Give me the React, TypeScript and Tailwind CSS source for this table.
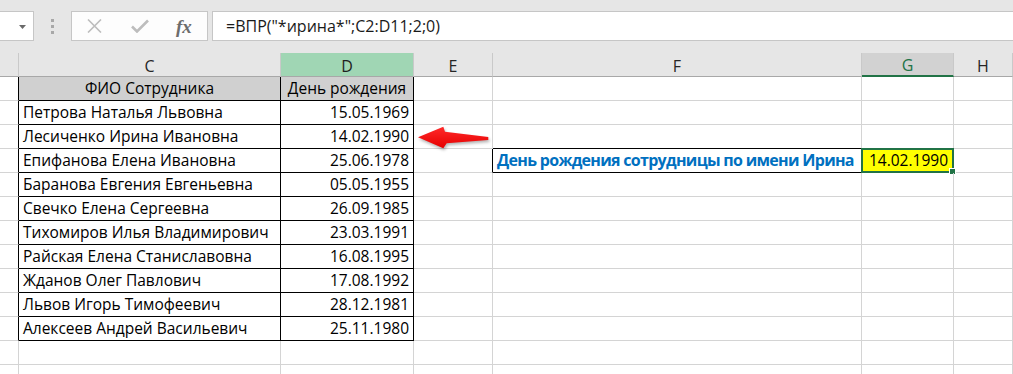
import React from "react";

const FONT = { fontFamily: '"Open Sans", "Noto Sans", sans-serif' };

const people: [string, string][] = [
  ["Петрова Наталья Львовна", "15.05.1969"],
  ["Лесиченко Ирина Ивановна", "14.02.1990"],
  ["Епифанова Елена Ивановна", "25.06.1978"],
  ["Баранова Евгения Евгеньевна", "05.05.1955"],
  ["Свечко Елена Сергеевна", "26.09.1985"],
  ["Тихомиров Илья Владимирович", "23.03.1991"],
  ["Райская Елена Станиславовна", "16.08.1995"],
  ["Жданов Олег Павлович", "17.08.1992"],
  ["Львов Игорь Тимофеевич", "28.12.1981"],
  ["Алексеев Андрей Васильевич", "25.11.1980"],
];

function FormulaBar() {
  return (
    <div className="h-[53px] bg-[#e6e6e6] pt-[11px]">
      <div className="flex h-[30px] items-stretch">
        {/* name box */}
        <div className="relative w-[34px] shrink-0 border-y border-r border-[#c6c6c6] bg-white">
          <svg className="absolute left-[19px] top-[13px]" width="7" height="4" viewBox="0 0 7 4">
            <path d="M0 0 L7 0 L3.5 4 Z" fill="#6a6a6a" />
          </svg>
        </div>
        {/* grip */}
        <div className="flex w-[37px] shrink-0 flex-col items-center justify-center gap-[3px]">
          <span className="h-[3px] w-[3px] bg-[#a8a8a8]" />
          <span className="h-[3px] w-[3px] bg-[#a8a8a8]" />
          <span className="h-[3px] w-[3px] bg-[#a8a8a8]" />
        </div>
        {/* cancel / enter / function */}
        <div className="flex w-[137px] shrink-0 items-center border border-[#c6c6c6] bg-[#fdfdfd]">
          <svg className="ml-[15px]" width="15" height="14" viewBox="0 0 15 14">
            <path d="M1 0.5 L14 13.5 M14 0.5 L1 13.5" stroke="#bdbdbd" strokeWidth="1.6" fill="none" />
          </svg>
          <svg className="ml-[29px]" width="18" height="14" viewBox="0 0 18 14">
            <path d="M1 7.5 L6 12.5 L17 1.5" stroke="#bdbdbd" strokeWidth="2.6" fill="none" />
          </svg>
          <span
            className="ml-[27px] text-[19px] font-bold italic leading-none text-[#6d6d6d]"
            style={{ fontFamily: '"Liberation Serif", "DejaVu Serif", serif' }}
          >
            fx
          </span>
        </div>
        {/* formula input */}
        <div className="ml-[4px] flex-1 border-y border-l border-[#c6c6c6] bg-white pl-[13px]">
          <span className="text-[16px] leading-[28px] text-[#1a1a1a]" style={FONT}>
            =ВПР("*ирина*";C2:D11;2;0)
          </span>
        </div>
      </div>
    </div>
  );
}

function ColumnHeaders() {
  const base =
    "h-[24px] shrink-0 border-r border-b border-r-[#c9c9c9] border-b-[#a8a8a8] pt-[2px] text-center text-[16px] leading-[22px]";
  return (
    <div className="flex bg-[#e6e6e6] text-[#262626]" style={FONT}>
      <div className={`${base} w-[19px]`} />
      <div className={`${base} w-[262px]`}>C</div>
      <div className={`${base} w-[133px] bg-[#a0d6b4] text-[#1e1e1e]`}>D</div>
      <div className={`${base} w-[79px]`}>E</div>
      <div className={`${base} w-[369px]`}>F</div>
      <div className="h-[24px] w-[92px] shrink-0 border-r border-b-2 border-r-[#c9c9c9] border-b-[#217346] bg-[#d2d2d2] pt-[2px] text-center text-[16px] leading-[21px] text-[#217346]">
        G
      </div>
      <div className={`${base} flex-1`}>H</div>
    </div>
  );
}

function GridRow({ r }: { r: number }) {
  const inTable = r >= 1 && r <= 11;
  const isHead = r === 1;
  const person = r >= 2 && r <= 11 ? people[r - 2] : null;
  const cell =
    "h-[24px] shrink-0 border-r border-b px-[4px] text-[15.5px] leading-[23px] whitespace-nowrap overflow-visible";
  const grid = "border-[#d4d4d4]";
  const black = "border-[#000000]";

  return (
    <div className="flex text-black" style={FONT}>
      <div className={`${cell} w-[19px] border-b-[#d4d4d4] ${inTable ? "border-r-black" : "border-r-[#d4d4d4]"}`} />
      <div
        className={`${cell} w-[262px] ${inTable ? black : grid} ${isHead ? "bg-[#d0d0d0] text-center" : "text-left"}`}
      >
        {isHead ? "ФИО Сотрудника" : person ? person[0] : ""}
      </div>
      <div
        className={`${cell} w-[133px] ${inTable ? black : grid} ${isHead ? "bg-[#d0d0d0] text-center" : "text-right"}`}
      >
        {isHead ? "День рождения" : person ? person[1] : ""}
      </div>
      <div className={`${cell} w-[79px] border-b-[#d4d4d4] ${r === 4 ? "border-r-black" : "border-r-[#d4d4d4]"}`} />
      <div
        className={`${cell} w-[369px] ${
          r === 4
            ? "border-black text-[16px] font-bold tracking-[-0.7px] text-[#0070c0]"
            : r === 3
            ? "border-r-[#d4d4d4] border-b-black"
            : grid
        }`}
      >
        {r === 4 ? "День рождения сотрудницы по имени Ирина" : ""}
      </div>
      <div className={`${cell} relative w-[92px] ${grid} ${r === 4 ? "bg-[#ffff00] pr-[5px] text-right" : ""}`}>
        {r === 4 && (
          <>
            14.02.1990
            <div className="pointer-events-none absolute -left-[1px] -top-[1px] h-[25px] w-[93px] border-2 border-[#217346]">
              <div className="absolute -bottom-[4px] -right-[4px] h-[7px] w-[7px] border border-white bg-[#217346]" />
            </div>
          </>
        )}
      </div>
      <div className={`${cell} flex-1 ${grid}`} />
    </div>
  );
}

function RedArrow() {
  return (
    <svg
      className="pointer-events-none absolute left-[414px] top-[124px]"
      width="80"
      height="28"
      viewBox="0 0 80 28"
      style={{ filter: "drop-shadow(1px 2px 1.5px rgba(0,0,0,0.3))" }}
    >
      <defs>
        <linearGradient id="arrowFill" x1="0" y1="0" x2="0" y2="1">
          <stop offset="0" stopColor="#ff2a2a" />
          <stop offset="1" stopColor="#e60000" />
        </linearGradient>
      </defs>
      <path
        d="M4 13.3 L29.3 2.7 L31 7.7 L74.3 13 L74.3 16 L32.7 19.3 L29.3 24.3 Z"
        fill="url(#arrowFill)"
      />
    </svg>
  );
}

export default function App() {
  const rows = Array.from({ length: 13 }, (_, i) => i + 1);
  return (
    <div className="relative h-[374px] w-[1013px] overflow-hidden bg-white">
      <FormulaBar />
      <ColumnHeaders />
      {rows.map((r) => (
        <GridRow key={r} r={r} />
      ))}
      <RedArrow />
    </div>
  );
}
